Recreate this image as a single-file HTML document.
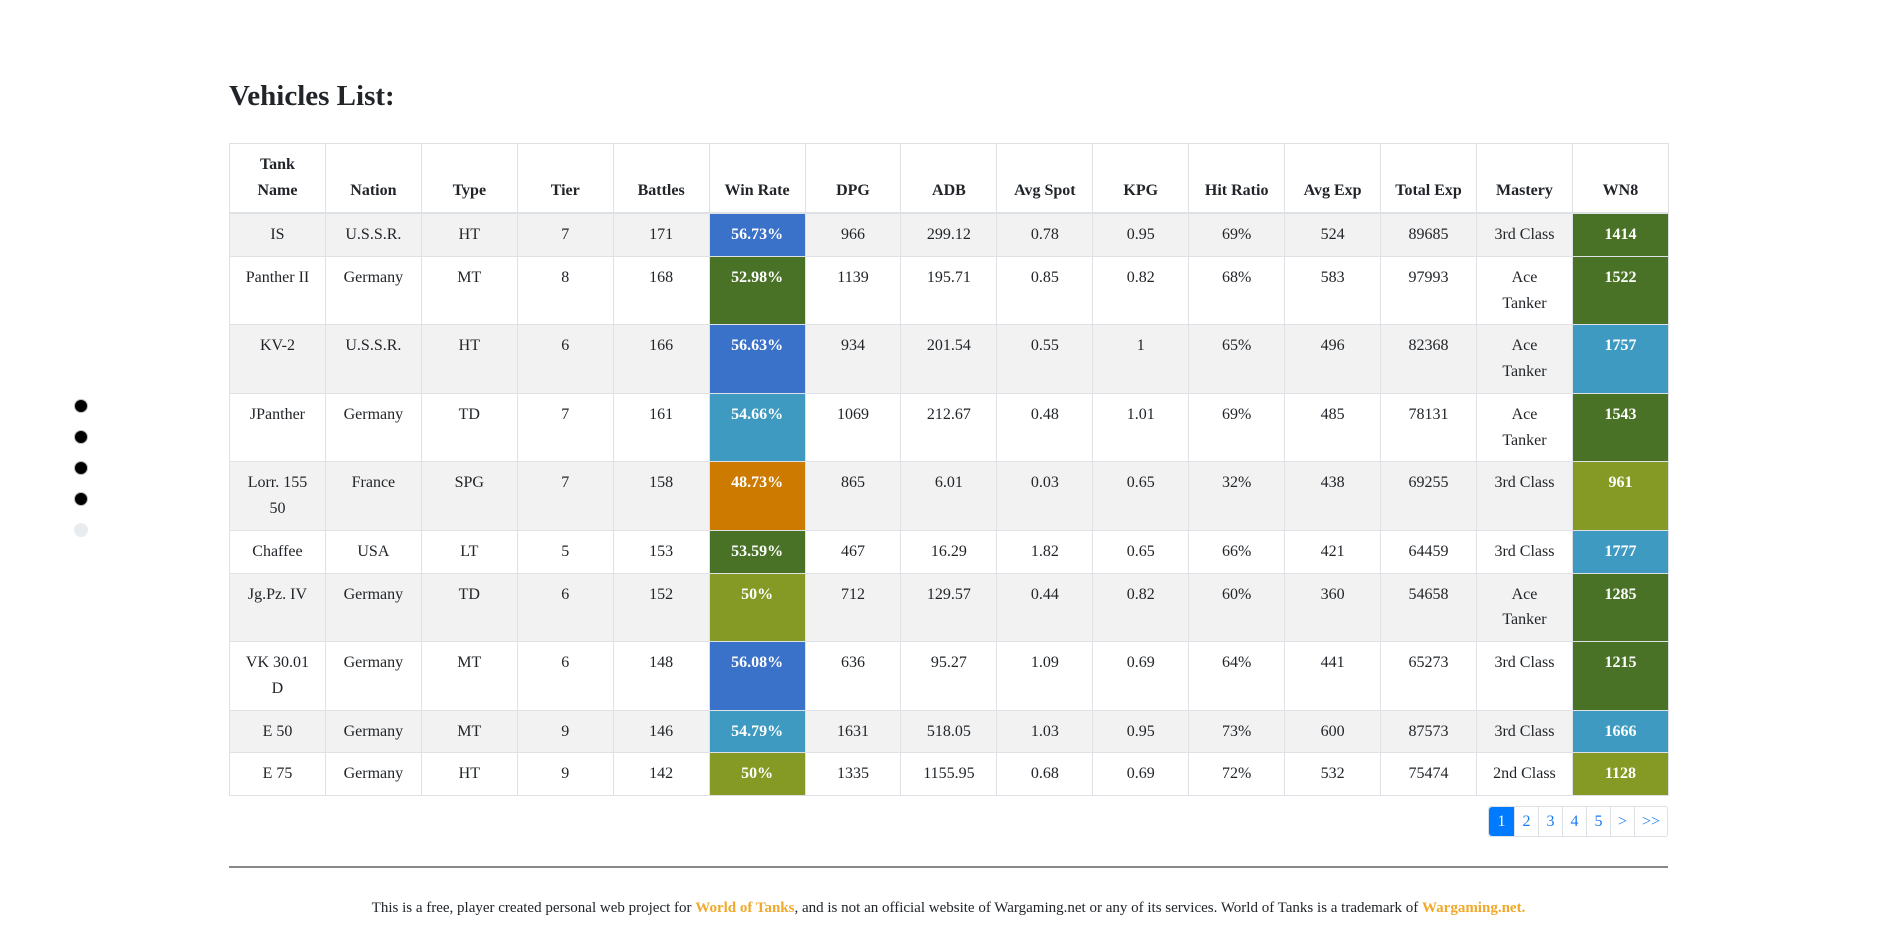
<!DOCTYPE html>
<html><head><meta charset="utf-8"><style>
body{margin:0;background:#fff;font-family:"Liberation Serif",serif;color:#212529;width:1897px;height:941px;overflow:hidden;position:relative}
h2{position:absolute;left:229px;top:78px;margin:0;font-size:29px;font-weight:bold;line-height:36px}
table{position:absolute;left:229px;top:143px;width:1440px;border-collapse:collapse;table-layout:fixed;font-size:16px}
td,th{border:1px solid #dee2e6;padding:8px 12px 7.85px;line-height:25.85px;text-align:center;vertical-align:top}
th{vertical-align:bottom;border-bottom:2px solid #dee2e6;padding:8px 6px;line-height:26px}
tbody tr:nth-child(odd){background:#f2f2f2}
.b{background:#3a71c9;color:#fff;font-weight:bold}.g{background:#4a7227;color:#fff;font-weight:bold}
.c{background:#3e9ac0;color:#fff;font-weight:bold}.o{background:#cc7a00;color:#fff;font-weight:bold}
.y{background:#849a24;color:#fff;font-weight:bold}
.dot{position:absolute;left:74px;width:12px;height:12px;border-radius:50%;background:#000;border:1px solid #bbb}
.pg{position:absolute;left:1488px;top:806px;height:31px;display:flex;border:1px solid #dee2e6;border-radius:3px;font-size:16px;box-sizing:border-box;width:180px}
.pg span{display:block;width:24px;line-height:29px;text-align:center;color:#1a7cf5;border-left:1px solid #dee2e6;box-sizing:border-box}
.pg span:first-child{background:#007bff;color:#fff;border:none;width:25px;border-radius:3px 0 0 3px}
hr{position:absolute;left:229px;top:866px;width:1439px;margin:0;border:0;border-top:2px solid #888}
.ft{position:absolute;left:0;width:1897px;top:900px;text-align:center;font-size:15px}
.ft b{color:#f0a92a}
</style></head><body>
<h2>Vehicles List:</h2>
<div class="dot" style="top:399px"></div><div class="dot" style="top:430px"></div><div class="dot" style="top:461px"></div><div class="dot" style="top:492px"></div><div class="dot" style="top:523px;background:#e9ecef;border-color:#e9ecef"></div>
<table><thead><tr><th style="padding:8px 14px">Tank Name</th><th>Nation</th><th>Type</th><th>Tier</th><th>Battles</th><th>Win Rate</th><th>DPG</th><th>ADB</th><th>Avg Spot</th><th>KPG</th><th>Hit Ratio</th><th>Avg Exp</th><th>Total Exp</th><th>Mastery</th><th>WN8</th></tr></thead>
<tbody>
<tr><td>IS</td><td>U.S.S.R.</td><td>HT</td><td>7</td><td>171</td><td class="b">56.73%</td><td>966</td><td>299.12</td><td>0.78</td><td>0.95</td><td>69%</td><td>524</td><td>89685</td><td>3rd Class</td><td class="g">1414</td></tr>
<tr><td>Panther II</td><td>Germany</td><td>MT</td><td>8</td><td>168</td><td class="g">52.98%</td><td>1139</td><td>195.71</td><td>0.85</td><td>0.82</td><td>68%</td><td>583</td><td>97993</td><td>Ace<br>Tanker</td><td class="g">1522</td></tr>
<tr><td>KV-2</td><td>U.S.S.R.</td><td>HT</td><td>6</td><td>166</td><td class="b">56.63%</td><td>934</td><td>201.54</td><td>0.55</td><td>1</td><td>65%</td><td>496</td><td>82368</td><td>Ace<br>Tanker</td><td class="c">1757</td></tr>
<tr><td>JPanther</td><td>Germany</td><td>TD</td><td>7</td><td>161</td><td class="c">54.66%</td><td>1069</td><td>212.67</td><td>0.48</td><td>1.01</td><td>69%</td><td>485</td><td>78131</td><td>Ace<br>Tanker</td><td class="g">1543</td></tr>
<tr><td>Lorr. 155<br>50</td><td>France</td><td>SPG</td><td>7</td><td>158</td><td class="o">48.73%</td><td>865</td><td>6.01</td><td>0.03</td><td>0.65</td><td>32%</td><td>438</td><td>69255</td><td>3rd Class</td><td class="y">961</td></tr>
<tr><td>Chaffee</td><td>USA</td><td>LT</td><td>5</td><td>153</td><td class="g">53.59%</td><td>467</td><td>16.29</td><td>1.82</td><td>0.65</td><td>66%</td><td>421</td><td>64459</td><td>3rd Class</td><td class="c">1777</td></tr>
<tr><td>Jg.Pz. IV</td><td>Germany</td><td>TD</td><td>6</td><td>152</td><td class="y">50%</td><td>712</td><td>129.57</td><td>0.44</td><td>0.82</td><td>60%</td><td>360</td><td>54658</td><td>Ace<br>Tanker</td><td class="g">1285</td></tr>
<tr><td>VK 30.01<br>D</td><td>Germany</td><td>MT</td><td>6</td><td>148</td><td class="b">56.08%</td><td>636</td><td>95.27</td><td>1.09</td><td>0.69</td><td>64%</td><td>441</td><td>65273</td><td>3rd Class</td><td class="g">1215</td></tr>
<tr><td>E 50</td><td>Germany</td><td>MT</td><td>9</td><td>146</td><td class="c">54.79%</td><td>1631</td><td>518.05</td><td>1.03</td><td>0.95</td><td>73%</td><td>600</td><td>87573</td><td>3rd Class</td><td class="c">1666</td></tr>
<tr><td>E 75</td><td>Germany</td><td>HT</td><td>9</td><td>142</td><td class="y">50%</td><td>1335</td><td>1155.95</td><td>0.68</td><td>0.69</td><td>72%</td><td>532</td><td>75474</td><td>2nd Class</td><td class="y">1128</td></tr>
</tbody></table>
<div class="pg"><span>1</span><span>2</span><span>3</span><span>4</span><span>5</span><span>&gt;</span><span style="width:33px">&gt;&gt;</span></div>
<hr>
<div class="ft">This is a free, player created personal web project for <b>World of Tanks</b>, and is not an official website of Wargaming.net or any of its services. World of Tanks is a trademark of <b>Wargaming.net.</b></div>
</body></html>
